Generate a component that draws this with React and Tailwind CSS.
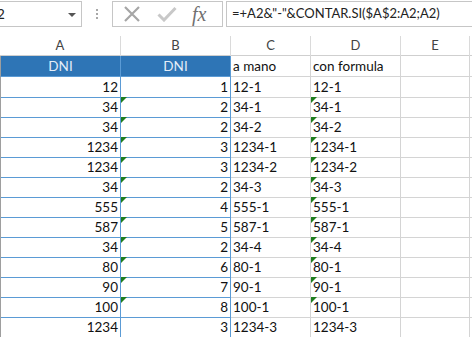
import React from 'react';

const rows = [
    [12, 1, '12-1', '12-1'],
    [34, 2, '34-1', '34-1'],
    [34, 2, '34-2', '34-2'],
    [1234, 3, '1234-1', '1234-1'],
    [1234, 3, '1234-2', '1234-2'],
    [34, 2, '34-3', '34-3'],
    [555, 4, '555-1', '555-1'],
    [587, 5, '587-1', '587-1'],
    [34, 2, '34-4', '34-4'],
    [80, 6, '80-1', '80-1'],
    [90, 7, '90-1', '90-1'],
    [100, 8, '100-1', '100-1'],
    [1234, 3, '1234-3', '1234-3'],
];

// little green "number stored as text" marker
function Flag() {
    return (
        <svg className="absolute left-0 top-0" width="6" height="6" viewBox="0 0 6 6">
            <polygon points="0,0 6,0 0,6" fill="#1e7d1e" />
        </svg>
    );
}

function FormulaBar() {
    return (
        <div className="flex h-[27px] items-start pt-[1px]">
            <div className="relative flex h-[26px] w-[82px] items-center overflow-hidden border border-l-0 border-[#c6c6c6]">
                <span className="ml-[-3px] text-[13.5px] text-[#222]">2</span>
                <svg className="absolute left-[68px] top-[11px]" width="8" height="4" viewBox="0 0 8 4">
                    <polygon points="0,0 8,0 4,4" fill="#555" />
                </svg>
            </div>
            <div className="flex w-[30px] flex-col items-center gap-[2px] pt-[8px]">
                <span className="h-[2px] w-[2px] bg-[#a8a8a8]" />
                <span className="h-[2px] w-[2px] bg-[#a8a8a8]" />
                <span className="h-[2px] w-[2px] bg-[#a8a8a8]" />
            </div>
            <div className="flex h-[26px] w-[111px] items-center border border-[#c6c6c6]">
                <svg className="ml-[10px]" width="18" height="18" viewBox="0 0 18 18">
                    <path d="M2 2 L16 16 M16 2 L2 16" stroke="#a6a6a6" strokeWidth="2.2" fill="none" />
                </svg>
                <svg className="ml-[16px]" width="20" height="16" viewBox="0 0 20 16">
                    <path d="M1.5 8.5 L7 14 L18.5 2" stroke="#c8c8c8" strokeWidth="3" fill="none" />
                </svg>
                <span className="ml-[15px] font-['Liberation_Serif',serif] text-[20px] italic leading-none text-[#707070]">
                    fx
                </span>
            </div>
            <div className="ml-[3px] flex h-[26px] flex-1 items-center border border-r-0 border-[#c6c6c6] pl-[5px] text-[13px] text-[#222]">
                =+A2&amp;"-"&amp;CONTAR.SI($A$2:A2;A2)
            </div>
        </div>
    );
}

export default function App() {
    const cols = 'grid grid-cols-[121px_110px_80px_90px_69px_1fr]';

    return (
        <div className="h-[337px] w-[472px] overflow-hidden bg-white font-['Lato',sans-serif]">
            <FormulaBar />

            {/* column letters */}
            <div className={`${cols} mt-[9px] h-[20px] border-b border-[#cfcfcf] text-[13px] text-[#444]`}>
                <div className="flex items-center justify-center border-r border-[#dadada]">A</div>
                <div className="flex items-center justify-center border-r border-[#dadada]">B</div>
                <div className="flex items-center justify-center border-r border-[#dadada]">C</div>
                <div className="flex items-center justify-center border-r border-[#dadada]">D</div>
                <div className="flex items-center justify-center border-r border-[#dadada]">E</div>
                <div />
            </div>

            {/* table header */}
            <div className={`${cols} h-[21px] text-[13.5px]`}>
                <div className="flex items-center justify-center border-b border-l border-r border-b-[#5b9bd5] border-l-[#9e9e9e] border-r-[#5b9bd5] bg-[#2e75b6] text-[#e4edf8]">DNI</div>
                <div className="flex items-center justify-center border-b border-r border-[#5b9bd5] bg-[#2e75b6] text-[#e4edf8]">DNI</div>
                <div className="flex items-center border-b border-r border-[#d4d4d4] pl-[2px] text-[#111]">a mano</div>
                <div className="flex items-center border-b border-r border-[#d4d4d4] pl-[2px] text-[#111]">con formula</div>
                <div className="border-b border-r border-[#d4d4d4]" />
                <div className="border-b border-[#d4d4d4]" />
            </div>

            {rows.map((r, i) => {
                const flagged = i > 0 && i < 12;
                return (
                    <div key={i} className={`${cols} h-[20px] text-[13.5px] text-[#111]`}>
                        <div className="flex items-center justify-end border-b border-l border-r border-b-[#5b9bd5] border-l-[#9e9e9e] border-r-[#5b9bd5] pr-[2px]">
                            {r[0]}
                        </div>
                        <div className="relative flex items-center justify-end border-b border-r border-[#5b9bd5] pr-[2px]">
                            {flagged && <Flag />}
                            {r[1]}
                        </div>
                        <div className="flex items-center border-b border-r border-[#d4d4d4] pl-[2px]">{r[2]}</div>
                        <div className="relative flex items-center border-b border-r border-[#d4d4d4] pl-[2px]">
                            {flagged && <Flag />}
                            {r[3]}
                        </div>
                        <div className="border-b border-r border-[#d4d4d4]" />
                        <div className="border-b border-[#d4d4d4]" />
                    </div>
                );
            })}
        </div>
    );
}
